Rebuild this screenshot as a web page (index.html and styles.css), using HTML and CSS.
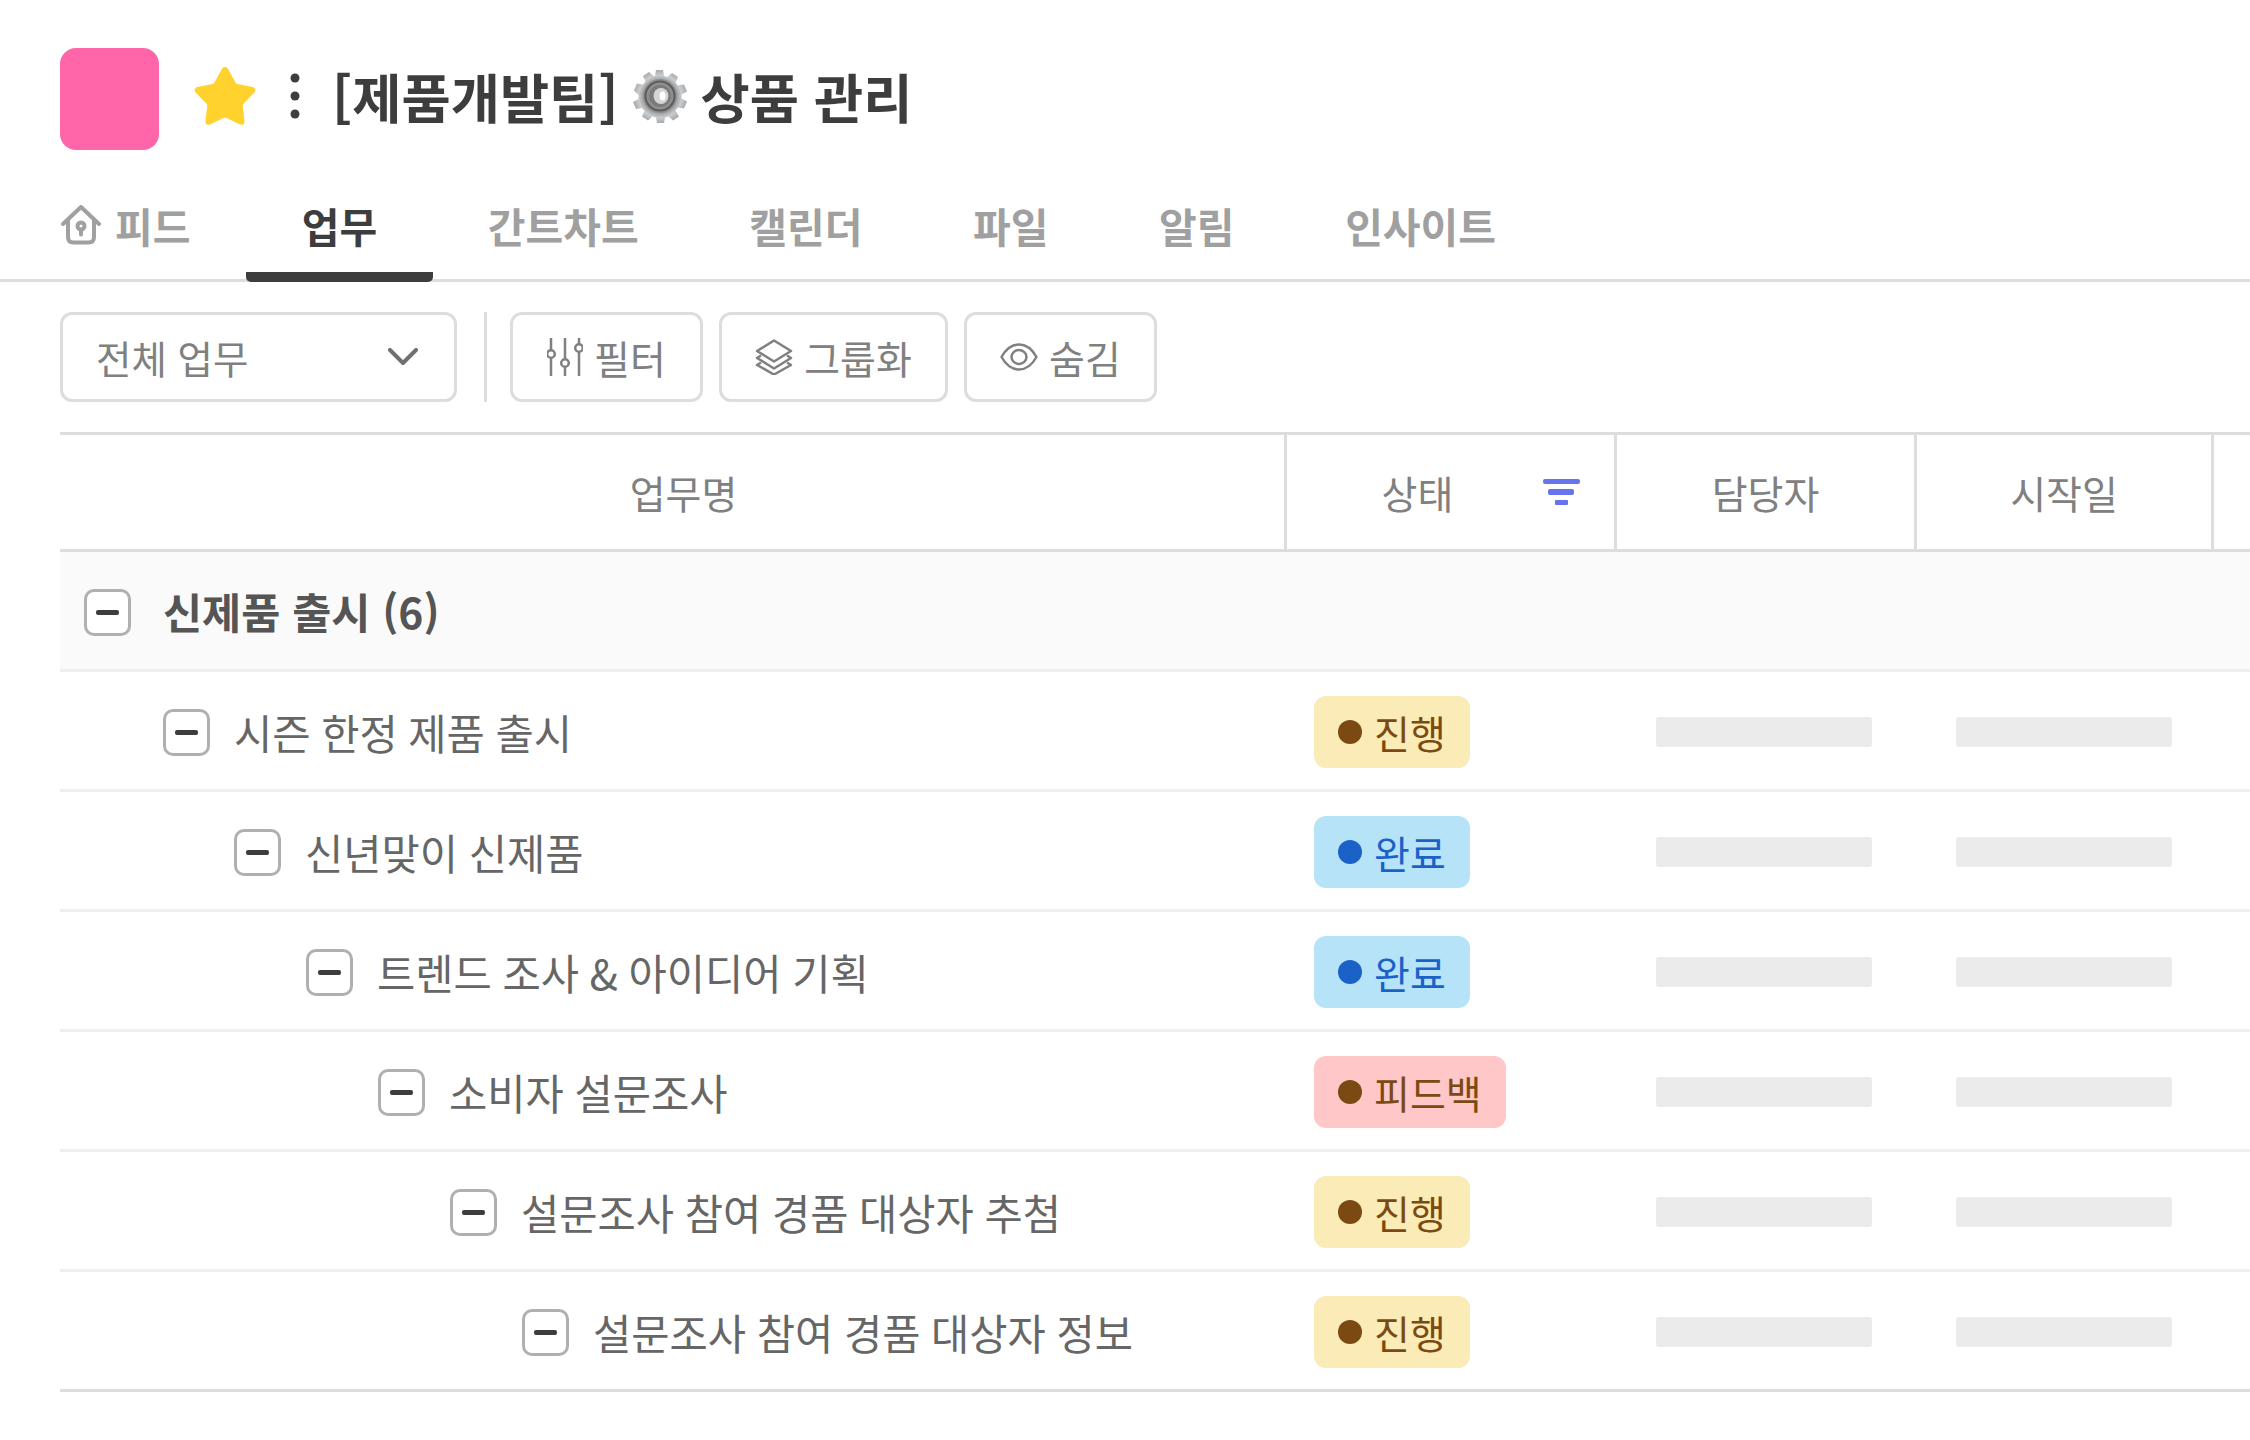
FILE: index.html
```html
<!DOCTYPE html>
<html lang="ko">
<head>
<meta charset="utf-8">
<title>상품 관리</title>
<link rel="stylesheet" href="styles.css">
</head>
<body>
<header class="head">
  <div class="logo"></div>
  <svg class="star" viewBox="0 0 64 60"><path d="M32 2c1.500 0 2.500.8 3.200 2.200l7.300 13.300c.5.9 1.100 1.400 2.100 1.600l15 3c2.800.6 3.700 3.300 1.800 5.400L50.700 38.400c-.7.800-1 1.500-.9 2.500l1.700 15.300c.3 2.700-1.900 4.400-4.400 3.200l-13.600-6.300c-1-.4-2-.4-3 0l-13.600 6.300c-2.500 1.200-4.700-.5-4.400-3.200l1.700-15.300c.1-1-.2-1.700-.9-2.500L2.600 27.500c-1.900-2.100-1-4.800 1.800-5.400l15-3c1-.2 1.600-.7 2.100-1.600l7.300-13.300C29.500 2.800 30.500 2 32 2z"/></svg>
  <svg class="kebab" viewBox="0 0 10 46"><circle cx="5" cy="5" r="4.500"/><circle cx="5" cy="23" r="4.500"/><circle cx="5" cy="41" r="4.500"/></svg>
  <h1 class="title">
    <span>[제품개발팀]</span>
    <svg class="gear" viewBox="0 0 54 54">
      <defs>
        <radialGradient id="g" cx="50%" cy="50%" r="50%"><stop offset="0" stop-color="#f2f2f2"/><stop offset=".35" stop-color="#6f6f6f"/><stop offset=".6" stop-color="#9a9a9a"/><stop offset=".8" stop-color="#c9cdd0"/><stop offset="1" stop-color="#a8abad"/></radialGradient>
      </defs>
      <path class="gear-body" fill="url(#g)" d="M23 1h7l1 6 3.500 1 4.500-4 6 4-2.500 5.500 2.500 3 6-1 3 7-5.500 3v4l5.500 3-3 7-6-1-2.500 3L46 47.500l-6 4-4.500-4-3.500 1-1 5.500h-7l-1-5.500-3.500-1-4.500 4-6-4 2.500-5.500-2.500-3-6 1-3-7 5.500-3v-4L1 21.500l3-7 6 1 2.500-3L10 7l6-4 4.500 4L22 7z"/>
      <circle cx="27" cy="27" r="17" fill="#8f8f8f"/>
      <circle cx="27" cy="27" r="14.500" fill="none" stroke="#5c5c5c" stroke-width="2"/>
      <circle cx="27" cy="27" r="11" fill="#7a7a7a"/>
      <ellipse cx="28" cy="27" rx="7.500" ry="8" fill="#d4d4d4"/>
      <ellipse cx="29.500" cy="27" rx="3" ry="4.500" fill="#fff"/>
    </svg>
    <span>상품 관리</span>
  </h1>
</header>

<nav class="tabs">
  <a class="tab tab-first">
    <svg class="home" viewBox="0 0 42 40"><path d="M3 19 21 2l18 17M8 15v17c0 3.500 2 5.500 5.500 5.500h15c3.500 0 5.500-2 5.500-5.500V15"/><circle class="home-dot" cx="21" cy="21" r="3.500"/><path d="M21 24.500v5"/></svg>
    피드
  </a>
  <a class="tab tab-on">업무</a>
  <a class="tab">간트차트</a>
  <a class="tab">캘린더</a>
  <a class="tab">파일</a>
  <a class="tab">알림</a>
  <a class="tab">인사이트</a>
</nav>

<section class="toolbar">
  <div class="select">
    <span>전체 업무</span>
    <svg class="chev" viewBox="0 0 30 18"><path d="M2 2l13 13L28 2"/></svg>
  </div>
  <i class="vline"></i>
  <button class="btn btn-filter">
    <svg class="ico" viewBox="0 0 36 38"><path d="M4 0v12M4 20v18M18 0v21M18 29v9M32 0v6M32 14v24"/><circle cx="4" cy="16" r="3.800"/><circle cx="18" cy="25" r="3.800"/><circle cx="32" cy="10" r="3.800"/></svg>
    필터
  </button>
  <button class="btn btn-group">
    <svg class="ico" viewBox="0 0 38 36"><path d="M19 1.500 36 12 19 22.500 2 12z"/><path d="M6 16.500 2 19l17 10.500L36 19l-4-2.500"/><path d="M6 23.500 2 26l17 9.500L36 26l-4-2.500"/></svg>
    그룹화
  </button>
  <button class="btn btn-hide">
    <svg class="ico" viewBox="0 0 38 28"><path d="M1.500 14C6 6 12 1.500 19 1.500S32 6 36.500 14C32 22 26 26.500 19 26.500S6 22 1.500 14z"/><ellipse cx="19" cy="14" rx="7.500" ry="7"/></svg>
    숨김
  </button>
</section>

<section class="table">
  <div class="thead">
    <div class="th th-name">업무명</div>
    <div class="th th-status">
      <span>상태</span>
      <svg class="funnel" viewBox="0 0 37 26"><rect x="0" y="0" width="37" height="5" rx="2"/><rect x="5" y="10" width="26" height="6" rx="2"/><rect x="12" y="21" width="13" height="5" rx="1"/></svg>
    </div>
    <div class="th">담당자</div>
    <div class="th">시작일</div>
    <div class="th"></div>
  </div>

  <div class="row row-group">
    <div class="name"><i class="toggle"></i><b>신제품 출시 (6)</b></div>
  </div>

  <div class="row">
    <div class="name lv1"><i class="toggle"></i><span>시즌 한정 제품 출시</span></div>
    <div class="status"><span class="badge b-yellow"><i></i>진행</span></div>
    <div class="ph"><i></i></div><div class="ph"><i></i></div>
  </div>
  <div class="row">
    <div class="name lv2"><i class="toggle"></i><span>신년맞이 신제품</span></div>
    <div class="status"><span class="badge b-blue"><i></i>완료</span></div>
    <div class="ph"><i></i></div><div class="ph"><i></i></div>
  </div>
  <div class="row">
    <div class="name lv3"><i class="toggle"></i><span>트렌드 조사 &amp; 아이디어 기획</span></div>
    <div class="status"><span class="badge b-blue"><i></i>완료</span></div>
    <div class="ph"><i></i></div><div class="ph"><i></i></div>
  </div>
  <div class="row">
    <div class="name lv4"><i class="toggle"></i><span>소비자 설문조사</span></div>
    <div class="status"><span class="badge b-red"><i></i>피드백</span></div>
    <div class="ph"><i></i></div><div class="ph"><i></i></div>
  </div>
  <div class="row">
    <div class="name lv5"><i class="toggle"></i><span>설문조사 참여 경품 대상자 추첨</span></div>
    <div class="status"><span class="badge b-yellow"><i></i>진행</span></div>
    <div class="ph"><i></i></div><div class="ph"><i></i></div>
  </div>
  <div class="row row-last">
    <div class="name lv6"><i class="toggle"></i><span>설문조사 참여 경품 대상자 정보</span></div>
    <div class="status"><span class="badge b-yellow"><i></i>진행</span></div>
    <div class="ph"><i></i></div><div class="ph"><i></i></div>
  </div>
</section>
</body>
</html>
```
FILE: styles.css
```css
* { box-sizing: border-box; }
html, body { margin: 0; background: #fff; }
body {
  width: 2250px;
  height: 1440px;
  overflow: hidden;
  font-family: "Noto Sans CJK KR", "Noto Sans", sans-serif;
  color: #666;
}

/* header */
.head { display: flex; align-items: center; height: 102px; margin: 48px 0 0 60px; }
.logo { width: 99px; height: 102px; border-radius: 16px; background: #ff66aa; margin-right: 34px; }
.star { width: 64px; height: 60px; fill: #ffd22e; margin: 0 33px 8px 0; }
.kebab { width: 10px; height: 46px; fill: #3d3d3d; margin: 0 32px 6px 0; }
.title { display: flex; align-items: center; gap: 14px; margin: 0 0 7px; font-size: 53.500px; font-weight: 700; line-height: 1; color: #3d3d3d; }
.gear { width: 54px; height: 54px; }

/* tabs */
.tabs { display: flex; height: 132px; border-bottom: 3px solid #ddd; }
.tab { display: flex; align-items: center; gap: 13px; height: 132px; padding: 27px 55.300px 0; font-size: 41px; font-weight: 700; color: #a0a0a0; border-bottom: 10px solid transparent; }
.tab-first { padding-left: 60px; padding-right: 56px; }
.tab-on { color: #3d3d3d; border-bottom-color: #3d3d3d; border-radius: 5px; }
.home { width: 42px; height: 40px; fill: none; stroke: #a0a0a0; stroke-width: 4; stroke-linecap: round; stroke-linejoin: round; }
.home-dot { fill: none; }

/* toolbar */
.toolbar { display: flex; align-items: stretch; height: 90px; margin: 30px 0 0 60px; }
.select, .btn { display: flex; align-items: center; height: 90px; border: 3px solid #ddd; border-radius: 12px; background: #fff; font-family: inherit; font-size: 39px; color: #808080; }
.select { width: 397px; justify-content: space-between; padding: 0 36px 0 33px; font-size: 38.500px; }
.chev { width: 30px; height: 18px; fill: none; stroke: #707070; stroke-width: 4; stroke-linecap: round; stroke-linejoin: round; }
.vline { width: 3px; background: #ddd; margin: 0 23px 0 27px; }
.btn { padding: 0; justify-content: center; gap: 11px; margin-right: 16px; }
.btn-filter { width: 193px; }
.btn-group { width: 229px; }
.btn-hide { width: 193px; }
.ico { fill: none; stroke: #808080; stroke-width: 2.500; stroke-linejoin: round; }
.btn-filter .ico { width: 36px; height: 38px; }
.btn-group .ico { width: 38px; height: 36px; }
.btn-hide .ico { width: 38px; height: 28px; }

/* table */
.table { margin: 30px 0 0 60px; border-top: 3px solid #ddd; }
.thead, .row { display: grid; grid-template-columns: 1227px 330px 300px 297px 1fr; height: 120px; border-bottom: 3px solid #eee; }
.row { padding-top: 3px; }
.thead { height: 117px; border-bottom-color: #ddd; }
.th { display: flex; align-items: center; justify-content: center; font-size: 39px; color: #808080; border-right: 3px solid #ddd; }
.th:last-child { border-right: 0; }
.th-name { padding-left: 23px; }
.th-status { gap: 90px; padding-left: 61px; }
.funnel { width: 37px; height: 26px; fill: #6674ee; }

.row-group { background: #fafafa; color: #555; }
.row-last { border-bottom-color: #ddd; }
.name { display: flex; align-items: center; gap: 24px; padding-left: 24px; font-size: 41.600px; word-spacing: -1px; color: #666; }
.row-group .name { grid-column: 1 / -1; gap: 32px; font-size: 42.500px; word-spacing: 0; color: #555; }
.row-group b { font-weight: 700; line-height: 1; margin-bottom: 2px; }
.lv1 { padding-left: 103px; }
.lv2 { padding-left: 174px; }
.lv3 { padding-left: 246px; }
.lv4 { padding-left: 318px; }
.lv5 { padding-left: 390px; }
.lv6 { padding-left: 462px; }

.toggle { display: flex; align-items: center; justify-content: center; flex: none; width: 47px; height: 47px; border: 3px solid #b0b0b0; border-radius: 10px; background: #fff; }
.toggle::before { content: ""; width: 23px; height: 5px; border-radius: 2px; background: #3d3d3d; }

.status { display: flex; align-items: center; padding-left: 27px; }
.badge { display: flex; align-items: center; gap: 12px; height: 72px; padding: 0 24px; border-radius: 12px; font-size: 39px; }
.badge i { width: 24px; height: 24px; border-radius: 50%; background: #7a4a12; }
.b-yellow { background: #faebb7; color: #7a4a12; }
.b-blue { background: #b7e3f9; color: #1a62c8; }
.b-blue i { background: #1a62c8; }
.b-red { background: #ffc7c7; color: #7a4a12; }
.ph { display: flex; align-items: center; padding-left: 39px; }
.ph i { width: 216px; height: 30px; border-radius: 3px; background: #ebebeb; }
```
